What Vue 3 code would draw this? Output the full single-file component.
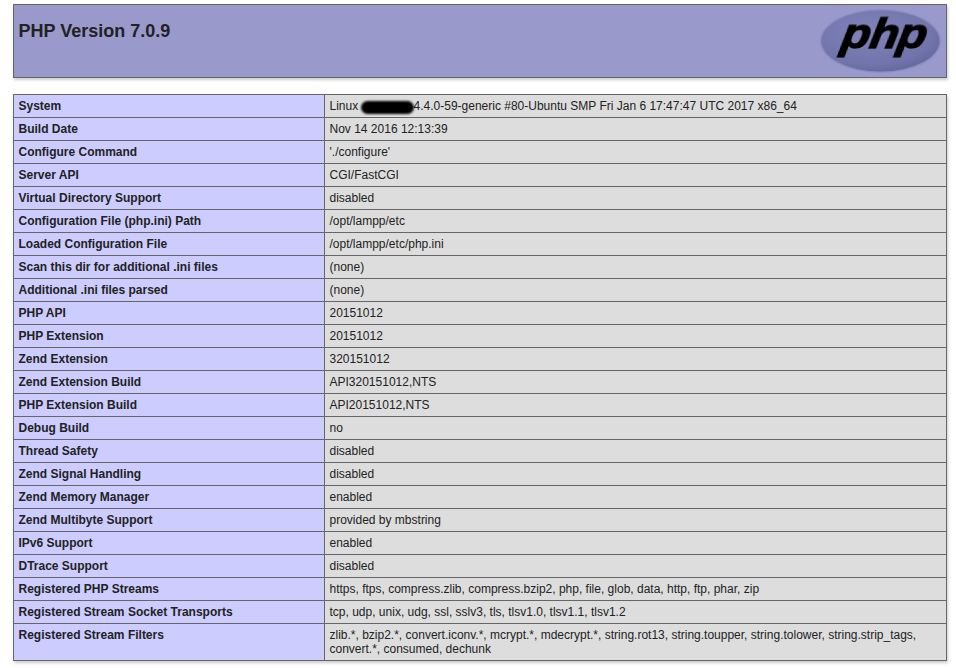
<script setup>
const rows = [
  ['Build Date', 'Nov 14 2016 12:13:39'],
  ['Configure Command', "'./configure'"],
  ['Server API', 'CGI/FastCGI'],
  ['Virtual Directory Support', 'disabled'],
  ['Configuration File (php.ini) Path', '/opt/lampp/etc'],
  ['Loaded Configuration File', '/opt/lampp/etc/php.ini'],
  ['Scan this dir for additional .ini files', '(none)'],
  ['Additional .ini files parsed', '(none)'],
  ['PHP API', '20151012'],
  ['PHP Extension', '20151012'],
  ['Zend Extension', '320151012'],
  ['Zend Extension Build', 'API320151012,NTS'],
  ['PHP Extension Build', 'API20151012,NTS'],
  ['Debug Build', 'no'],
  ['Thread Safety', 'disabled'],
  ['Zend Signal Handling', 'disabled'],
  ['Zend Memory Manager', 'enabled'],
  ['Zend Multibyte Support', 'provided by mbstring'],
  ['IPv6 Support', 'enabled'],
  ['DTrace Support', 'disabled'],
  ['Registered PHP Streams', 'https, ftps, compress.zlib, compress.bzip2, php, file, glob, data, http, ftp, phar, zip'],
  ['Registered Stream Socket Transports', 'tcp, udp, unix, udg, ssl, sslv3, tls, tlsv1.0, tlsv1.1, tlsv1.2'],
  ['Registered Stream Filters', 'zlib.*, bzip2.*, convert.iconv.*, mcrypt.*, mdecrypt.*, string.rot13, string.toupper, string.tolower, string.strip_tags, convert.*, consumed, dechunk'],
]
</script>

<template>
  <div class="page">
    <table class="head">
      <tbody>
        <tr>
          <td class="h">
            <svg class="logo" width="122" height="64" viewBox="0 0 122 64">
              <defs>
                <radialGradient id="g" cx="0.42" cy="0.35" r="0.72">
                  <stop offset="0" stop-color="#8184bb" />
                  <stop offset="0.75" stop-color="#7074aa" />
                  <stop offset="1" stop-color="#60649a" />
                </radialGradient>
              </defs>
              <ellipse cx="60.5" cy="32" rx="60.5" ry="32" fill="#8a8dc0" />
              <ellipse cx="60.5" cy="32" rx="59" ry="30.5" fill="url(#g)" />
              <text class="logotext" transform="translate(20 39) skewX(-10) scale(1.12 1)">php</text>
            </svg>
            <h1>PHP Version 7.0.9</h1>
          </td>
        </tr>
      </tbody>
    </table>
    <table class="info">
      <tbody>
        <tr>
          <td class="e">System</td>
          <td class="v">Linux <span class="redact"></span>4.4.0-59-generic #80-Ubuntu SMP Fri Jan 6 17:47:47 UTC 2017 x86_64</td>
        </tr>
        <tr v-for="r in rows" :key="r[0]">
          <td class="e">{{ r[0] }}</td>
          <td class="v">{{ r[1] }}</td>
        </tr>
      </tbody>
    </table>
  </div>
</template>

<style scoped>
.page {
  padding: 4px 9px 8px 12.5px;
  color: #222;
  background: #fff;
  font-family: "Liberation Sans", Arial, sans-serif;
}
table {
  border-collapse: collapse;
  border: 0;
  width: 934px;
  box-shadow: 1px 2px 3px #ccc;
}
.head {
  margin-bottom: 16px;
}
td {
  border: 1px solid #666;
  font-size: 12px;
  vertical-align: baseline;
  padding: 4px 5px;
}
.h {
  background: #99c;
  font-weight: bold;
}
h1 {
  margin: 12px 0;
  font-size: 18px;
}
.logo {
  float: right;
  margin-right: -1px;
}
.logotext {
  font-family: "Liberation Sans", Arial, sans-serif;
  font-style: italic;
  font-weight: bold;
  font-size: 42px;
  letter-spacing: -0.5px;
  fill: #000;
  stroke: #000;
  stroke-width: 1.4px;
  filter: drop-shadow(0.7px 0.7px 0 rgba(255, 255, 255, 0.35));
}
.e {
  background: #ccf;
  width: 300px;
  font-weight: bold;
}
.v {
  background: #ddd;
  word-wrap: break-word;
}
.redact {
  display: inline-block;
  width: 53px;
  height: 13px;
  margin: -4px 0 -3px -1px;
  vertical-align: -1px;
  background: #000;
  border-radius: 7px;
  filter: blur(1px);
}
</style>
